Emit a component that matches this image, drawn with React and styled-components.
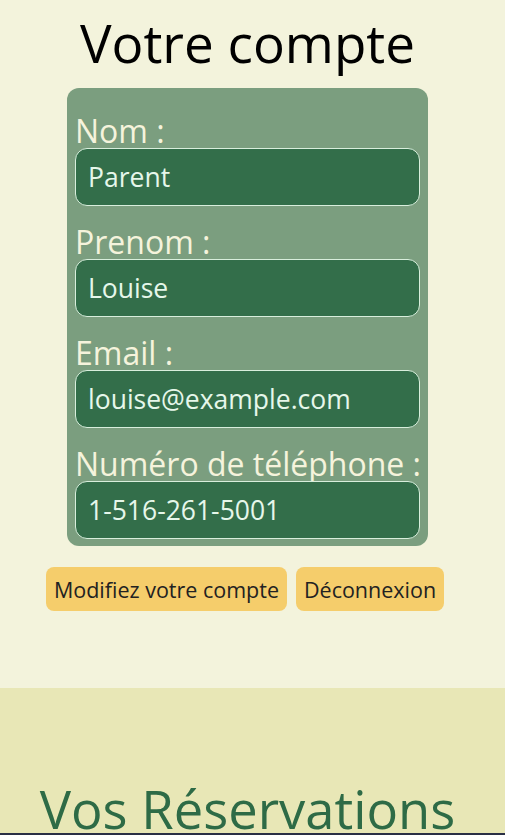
import React from 'react'
import styled, { createGlobalStyle } from 'styled-components'

const GlobalStyle = createGlobalStyle`
  body {
    margin: 0;
    font-family: "Open Sans", "Noto Sans", sans-serif;
    background-color: #f3f3dc;
  }
`

const AccountSection = styled.section`
  height: 688px;
  box-sizing: border-box;
  padding-right: 10px;
  display: flex;
  flex-direction: column;
  align-items: center;
  background-color: #f3f3dc;
`

const Title = styled.h1`
  margin: 8px 0 0;
  font-size: 53px;
  font-weight: 400;
  line-height: 70px;
  color: #000;
`

const Card = styled.div`
  width: 361px;
  box-sizing: border-box;
  margin-top: 10px;
  padding: 15px 8px 7px;
  border-radius: 12px;
  background-color: #7b9e7f;
  display: flex;
  flex-direction: column;
  gap: 8px;
`

const Field = styled.div`
  display: flex;
  flex-direction: column;
`

const Label = styled.label`
  height: 45px;
  line-height: 55px;
  font-size: 32px;
  color: #f5f3dc;
  white-space: nowrap;
`

const Value = styled.div`
  height: 58px;
  box-sizing: border-box;
  padding: 0 12px;
  display: flex;
  align-items: center;
  border: 1px solid #d8eedc;
  border-radius: 12px;
  background-color: #336e4a;
  color: #e6f7ea;
  font-size: 26.5px;
`

const Actions = styled.div`
  display: flex;
  gap: 9px;
  margin-top: 21px;
  margin-right: 5px;
`

const Button = styled.button`
  height: 44px;
  padding: 0 8px;
  border: none;
  border-radius: 8px;
  background-color: #f5cd6b;
  color: #222;
  font-family: inherit;
  font-size: 21.5px;
`

const ReservationSection = styled.section`
  height: 147px;
  box-sizing: border-box;
  padding-right: 10px;
  background-color: #e8e7b6;
  border-bottom: 2px solid #2a2f45;
  overflow: hidden;
  display: flex;
  justify-content: center;
`

const SectionTitle = styled.h2`
  margin: 86px 0 0;
  font-size: 52.5px;
  font-weight: 400;
  line-height: 70px;
  color: #2e6b46;
  white-space: nowrap;
`

const fields = [
  { label: 'Nom :', value: 'Parent' },
  { label: 'Prenom :', value: 'Louise' },
  { label: 'Email :', value: 'louise@example.com' },
  { label: 'Numéro de téléphone :', value: '1-516-261-5001' },
]

export default function App() {
  return (
    <>
      <GlobalStyle />
      <AccountSection>
        <Title>Votre compte</Title>
        <Card>
          {fields.map((f) => (
            <Field key={f.label}>
              <Label>{f.label}</Label>
              <Value>{f.value}</Value>
            </Field>
          ))}
        </Card>
        <Actions>
          <Button>Modifiez votre compte</Button>
          <Button>Déconnexion</Button>
        </Actions>
      </AccountSection>
      <ReservationSection>
        <SectionTitle>Vos Réservations</SectionTitle>
      </ReservationSection>
    </>
  )
}
